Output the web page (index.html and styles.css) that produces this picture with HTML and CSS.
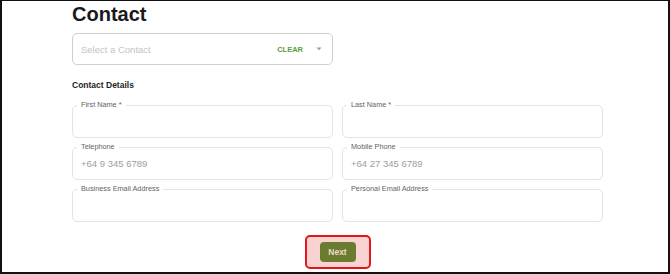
FILE: index.html
```html
<!DOCTYPE html>
<html lang="en">
<head>
<meta charset="utf-8">
<title>Contact</title>
<link rel="stylesheet" href="styles.css">
</head>
<body>
<div class="frame">
  <div class="content">
    <h1 class="title">Contact</h1>
    <div class="select">
      <span class="select-placeholder">Select a Contact</span>
      <span class="select-clear">CLEAR</span>
      <svg class="select-arrow" width="6" height="4" viewBox="0 0 6 4"><polygon points="0.5,0.5 5.5,0.5 3,3.2" fill="#9a9a9a"/></svg>
    </div>
    <div class="section-title">Contact Details</div>
    <div class="fields">
      <div class="field"><span class="field-label">First Name *</span></div>
      <div class="field"><span class="field-label">Last Name *</span></div>
      <div class="field"><span class="field-label">Telephone</span><span class="field-placeholder">+64 9 345 6789</span></div>
      <div class="field"><span class="field-label">Mobile Phone</span><span class="field-placeholder">+64 27 345 6789</span></div>
      <div class="field"><span class="field-label">Business Email Address</span></div>
      <div class="field"><span class="field-label">Personal Email Address</span></div>
    </div>
    <div class="actions">
      <div class="highlight">
        <button class="btn-next" type="button">Next</button>
      </div>
    </div>
  </div>
</div>
</body>
</html>
```

FILE: styles.css
```css
html, body {
  margin: 0;
  padding: 0;
  background: #ffffff;
}

body {
  font-family: "Liberation Sans", Arial, sans-serif;
}

.frame {
  width: 670px;
  height: 274px;
  box-sizing: border-box;
  border-style: solid;
  border-color: #111111;
  border-width: 1px 2px 2px 2px;
  overflow: hidden;
}

.content {
  padding: 1px 0 0 70px;
  width: 531px;
}

.title {
  margin: 0;
  font-size: 20px;
  line-height: 24px;
  font-weight: 700;
  color: #1a1a1a;
}

.select {
  margin-top: 7px;
  width: 261px;
  height: 32px;
  box-sizing: border-box;
  border: 1px solid #cfcfcf;
  border-radius: 5px;
  display: flex;
  align-items: center;
  padding: 0 10px 0 8px;
}

.select-placeholder {
  flex: 1;
  font-size: 9.5px;
  color: #c4c4c4;
}

.select-clear {
  font-size: 7.5px;
  font-weight: 700;
  color: #5c9e3c;
  margin-right: 13px;
}

.select-arrow {
  display: block;
}

.section-title {
  margin-top: 14px;
  font-size: 8.5px;
  line-height: 12px;
  font-weight: 700;
  color: #1e1e1e;
}

.fields {
  margin-top: 14px;
  display: grid;
  grid-template-columns: 261px 261px;
  grid-auto-rows: 33px;
  column-gap: 9px;
  row-gap: 9px;
}

.field {
  position: relative;
  box-sizing: border-box;
  border: 1px solid #e3e3e3;
  border-radius: 5px;
  display: flex;
  align-items: center;
  padding-left: 8px;
}

.field-label {
  position: absolute;
  left: 4px;
  top: -6px;
  padding: 0 4px;
  background: #ffffff;
  font-size: 7.3px;
  line-height: 10px;
  color: #5f6368;
}

.field-placeholder {
  font-size: 9.5px;
  color: #9e9e9e;
}

.actions {
  margin-top: 13px;
  display: flex;
  justify-content: center;
}

.highlight {
  border: 2px solid #e2161b;
  border-radius: 5px;
  background: #f9d2d2;
  padding: 5px 13px;
  display: flex;
}

.btn-next {
  width: 36px;
  height: 20px;
  border: none;
  border-radius: 4px;
  background: #6b7b2f;
  color: #eadcc6;
  font-family: "Liberation Sans", Arial, sans-serif;
  font-size: 8.5px;
  font-weight: 700;
  padding: 0;
}
```
